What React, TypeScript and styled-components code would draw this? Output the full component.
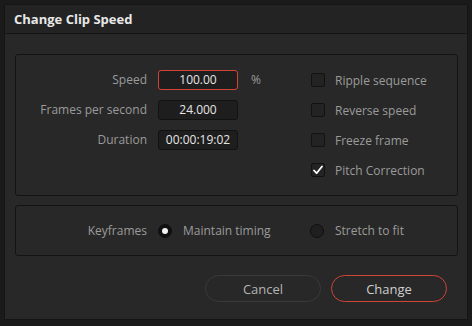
import React, { useState } from "react";
import styled, { createGlobalStyle } from "styled-components";

const GlobalStyle = createGlobalStyle`
  html, body {
    margin: 0;
    padding: 0;
    background: #1a1a1a;
    font-family: "Open Sans", "Liberation Sans", sans-serif;
    -webkit-font-smoothing: antialiased;
  }
`;

const Page = styled.div`
  width: 472px;
  height: 326px;
  padding: 4px 0 0 4px;
  box-sizing: border-box;
  overflow: hidden;
`;

const Dialog = styled.div`
  width: 464px;
  height: 316px;
  box-sizing: border-box;
  background: #282828;
  border: 1px solid #151515;
  display: flex;
  flex-direction: column;
`;

const Header = styled.div`
  height: 29px;
  box-sizing: border-box;
  background: #232323;
  border-bottom: 1px solid #141414;
  display: flex;
  align-items: center;
  padding-left: 9px;
  font-size: 13px;
  font-weight: 700;
  color: #e8e8e8;
`;

const Body = styled.div`
  padding: 20px 9px 0 10px;
  display: flex;
  flex-direction: column;
`;

const Group = styled.div<{ $height: number }>`
  height: ${p => p.$height}px;
  box-sizing: border-box;
  border: 1px solid #131313;
  border-radius: 3px;
  display: flex;
  margin-bottom: 9px;
`;

const FieldGrid = styled.div`
  display: grid;
  grid-template-columns: 131px 80px 40px;
  grid-auto-rows: 30px;
  column-gap: 11px;
  align-items: start;
  padding-top: 15px;
  width: 295px;
`;

const Label = styled.div`
  font-size: 12px;
  color: #9b9b9b;
  text-align: right;
  line-height: 20px;
  white-space: nowrap;
`;

const Unit = styled(Label)`
  text-align: left;
  padding-left: 2px;
`;

const Field = styled.div<{ $active?: boolean }>`
  height: 20px;
  box-sizing: border-box;
  background: #1e1e1e;
  border: 1px solid ${p => (p.$active ? "#cf4536" : "#121212")};
  border-radius: 3px;
  color: #e6e6e6;
  font-size: 12px;
  line-height: 18px;
  text-align: center;
`;

const CheckList = styled.div`
  display: flex;
  flex-direction: column;
  padding-top: 17px;
`;

const CheckRow = styled.label`
  display: flex;
  align-items: center;
  height: 30px;
  margin-top: -7px;
  margin-bottom: 7px;
  gap: 10px;
  font-size: 12px;
  color: #9b9b9b;
  cursor: pointer;
`;

const Box = styled.span`
  width: 14px;
  height: 14px;
  box-sizing: border-box;
  border: 1px solid #121212;
  border-radius: 2px;
  background: #232323;
  display: flex;
  align-items: center;
  justify-content: center;
`;

const RadioRow = styled.div`
  display: flex;
  align-items: center;
  width: 100%;
`;

const RadioLabel = styled(Label)`
  width: 131px;
  margin-right: 11px;
`;

const RadioOption = styled.label<{ $width: number }>`
  display: flex;
  align-items: center;
  gap: 11px;
  width: ${p => p.$width}px;
  font-size: 12px;
  color: #9b9b9b;
  cursor: pointer;
`;

const Dot = styled.span<{ $on: boolean }>`
  width: 14px;
  height: 14px;
  box-sizing: border-box;
  border-radius: 50%;
  border: 1px solid #0f0f0f;
  background: ${p => (p.$on ? "#111" : "#1f1f1f")};
  display: flex;
  align-items: center;
  justify-content: center;
  &::after {
    content: "";
    display: ${p => (p.$on ? "block" : "none")};
    width: 6px;
    height: 6px;
    border-radius: 50%;
    background: #f2f2f2;
  }
`;

const Footer = styled.div`
  display: flex;
  justify-content: flex-end;
  gap: 10px;
  padding: 10px 20px 0 0;
`;

const Button = styled.button<{ $primary?: boolean }>`
  width: 116px;
  height: 27px;
  border-radius: 13.5px;
  background: #282828;
  border: 1px solid ${p => (p.$primary ? "#cf4536" : "#3a3a3a")};
  color: ${p => (p.$primary ? "#cfcfcf" : "#b4b4b4")};
  font-family: "Open Sans", "Liberation Sans", sans-serif;
  font-size: 13px;
  padding: 0;
  cursor: pointer;
`;

const Tick = () => (
  <svg width="12" height="12" viewBox="0 0 12 12">
    <path d="M2 6.5 L4.6 9.2 L10 2.5" fill="none" stroke="#fff" strokeWidth="1.8" strokeLinecap="round" strokeLinejoin="round" />
  </svg>
);

const options = [
  { label: "Ripple sequence", checked: false },
  { label: "Reverse speed", checked: false },
  { label: "Freeze frame", checked: false },
  { label: "Pitch Correction", checked: true }
];

const App = () => {
  const [checks, setChecks] = useState(options.map(o => o.checked));
  const [keyframes, setKeyframes] = useState<"maintain" | "stretch">("maintain");

  return (
    <>
      <GlobalStyle />
      <Page>
        <Dialog>
          <Header>Change Clip Speed</Header>
          <Body>
            <Group $height={142}>
              <FieldGrid>
                <Label>Speed</Label>
                <Field $active>100.00</Field>
                <Unit>%</Unit>
                <Label>Frames per second</Label>
                <Field>24.000</Field>
                <span />
                <Label>Duration</Label>
                <Field>00:00:19:02</Field>
                <span />
              </FieldGrid>
              <CheckList>
                {options.map((o, i) => (
                  <CheckRow
                    key={o.label}
                    onClick={() => setChecks(c => c.map((v, j) => (j === i ? !v : v)))}
                  >
                    <Box>{checks[i] && <Tick />}</Box>
                    {o.label}
                  </CheckRow>
                ))}
              </CheckList>
            </Group>
            <Group $height={51}>
              <RadioRow>
                <RadioLabel>Keyframes</RadioLabel>
                <RadioOption $width={152} onClick={() => setKeyframes("maintain")}>
                  <Dot $on={keyframes === "maintain"} />
                  Maintain timing
                </RadioOption>
                <RadioOption $width={140} onClick={() => setKeyframes("stretch")}>
                  <Dot $on={keyframes === "stretch"} />
                  Stretch to fit
                </RadioOption>
              </RadioRow>
            </Group>
          </Body>
          <Footer>
            <Button>Cancel</Button>
            <Button $primary>Change</Button>
          </Footer>
        </Dialog>
      </Page>
    </>
  );
};

export default App;
